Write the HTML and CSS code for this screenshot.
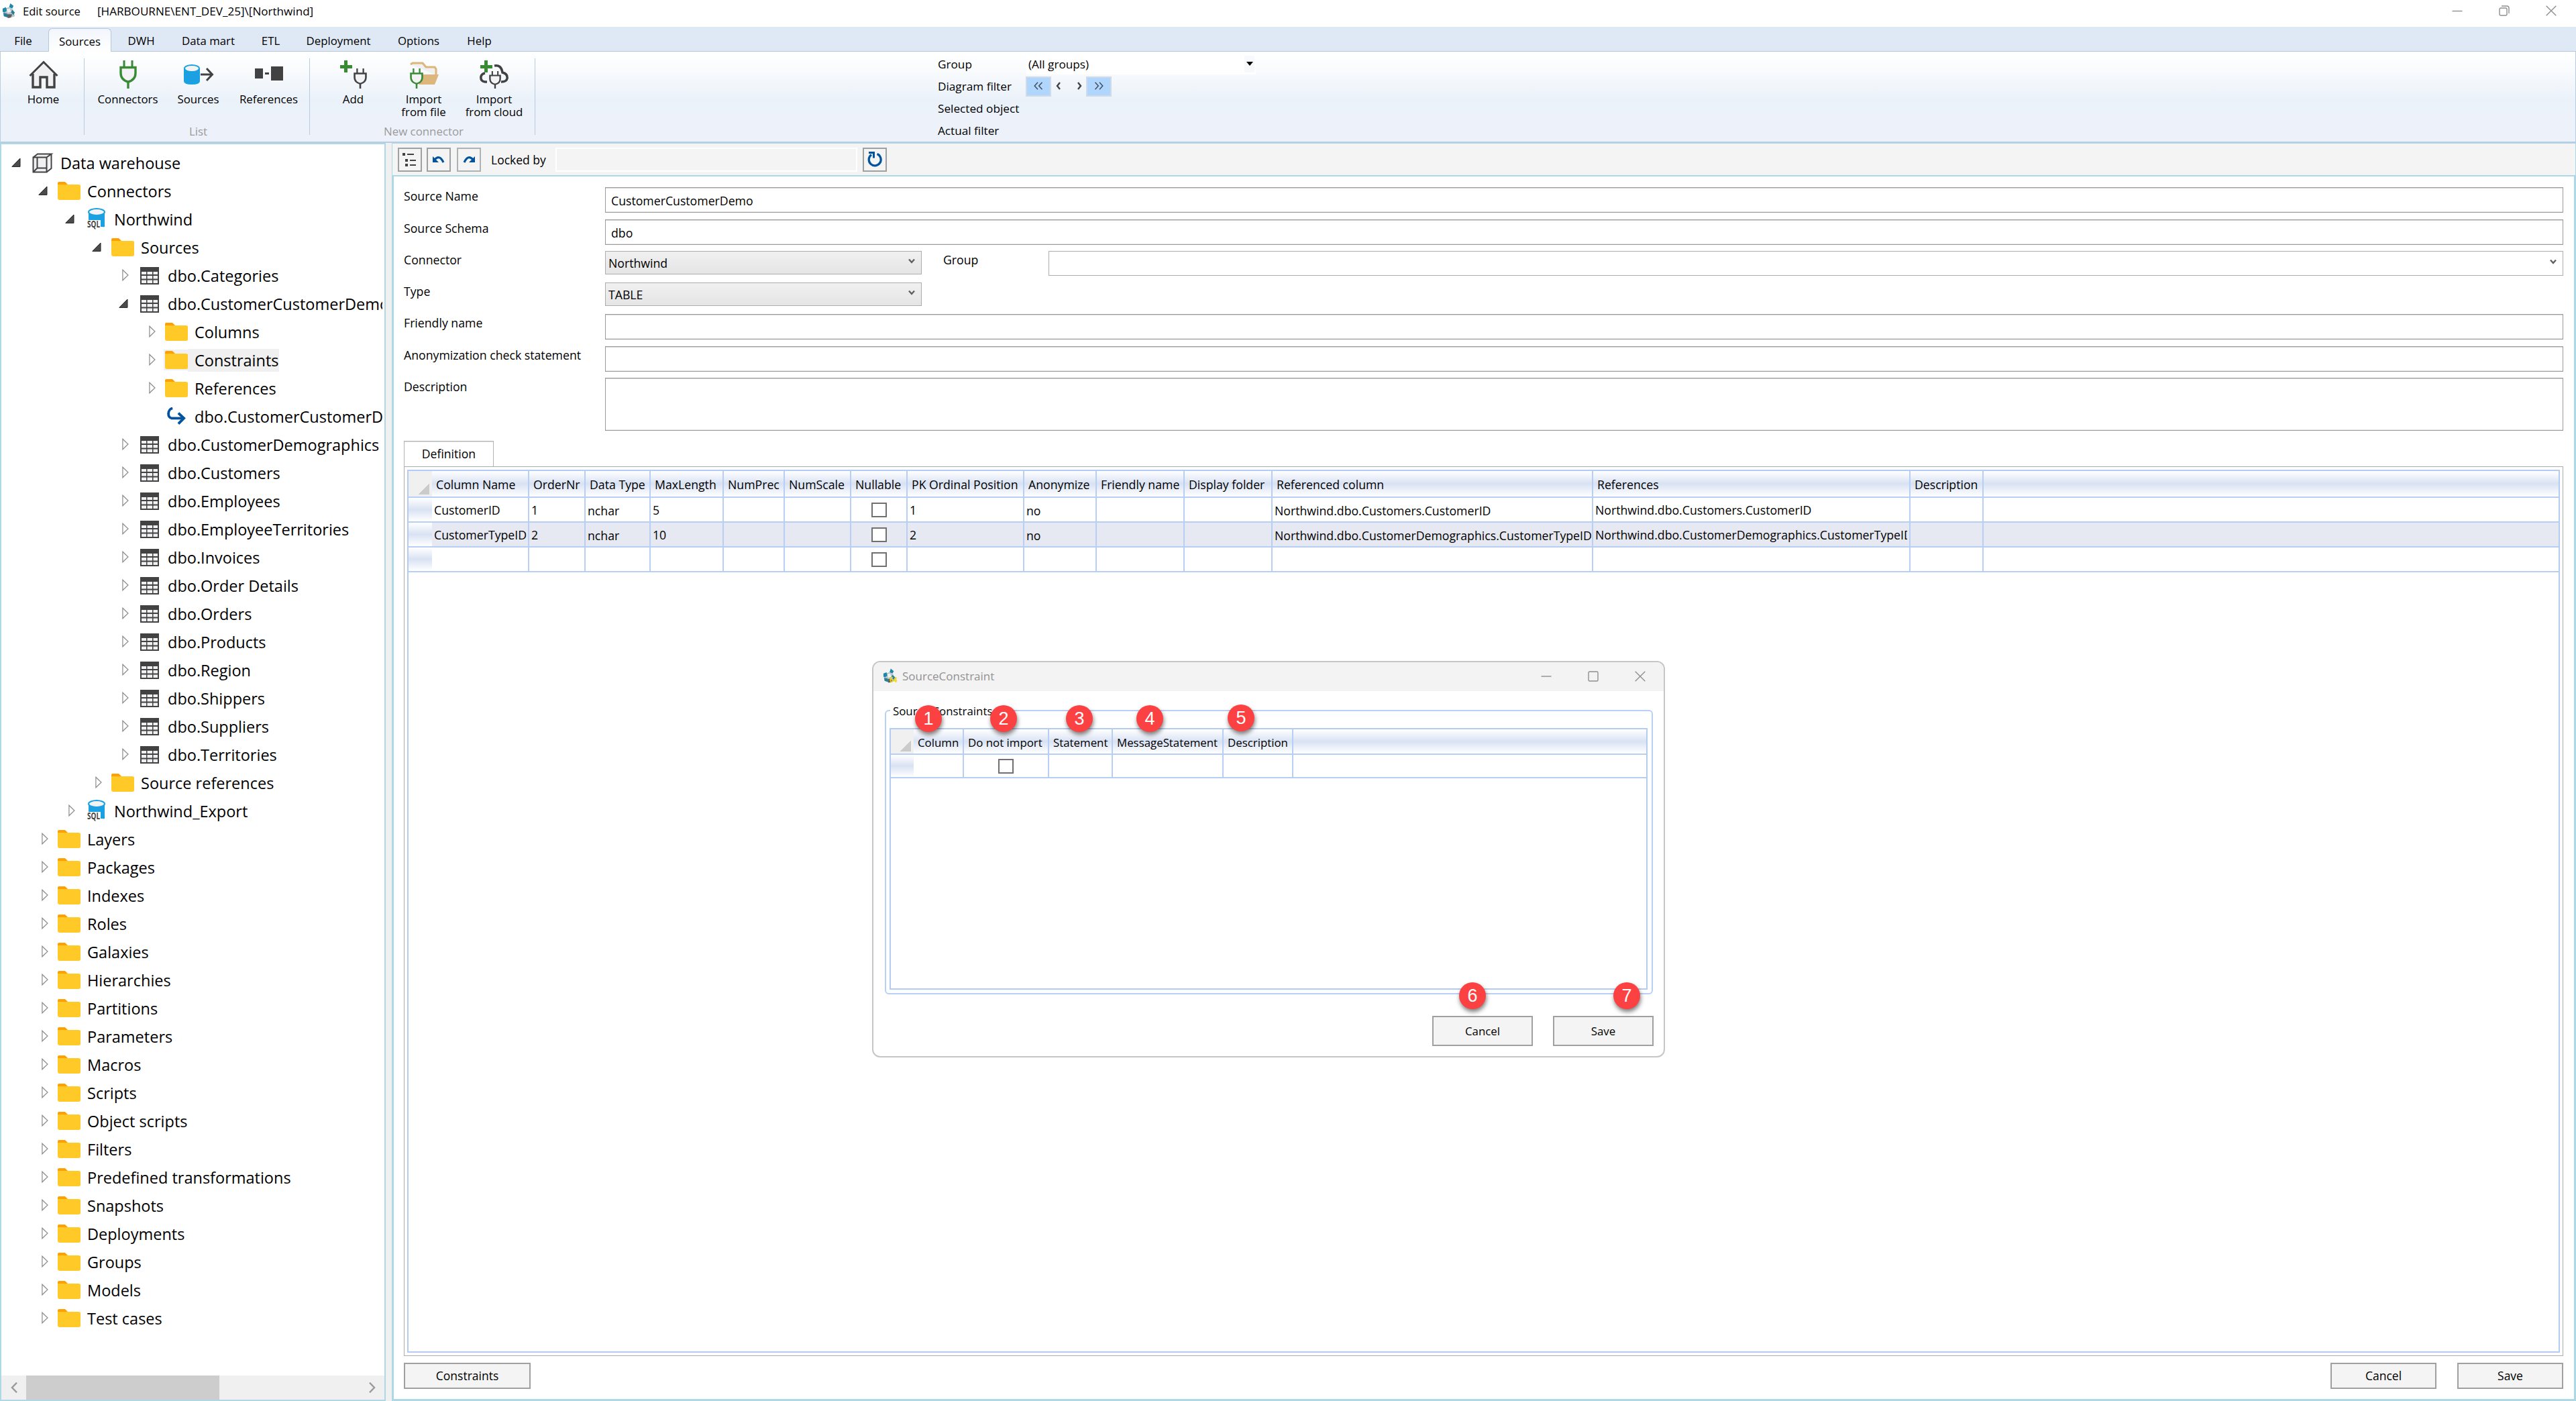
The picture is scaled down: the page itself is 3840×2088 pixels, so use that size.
FILE: index.html
```html
<!DOCTYPE html>
<html lang="en">
<head>
<meta charset="utf-8">
<title>Edit source</title>
<link rel="stylesheet" href="styles.css">
</head>
<body>
<svg class="sprite" width="0" height="0" aria-hidden="true">
  <defs>
    <symbol id="open" viewBox="0 0 14 14"><path d="M13 1V13.4H.8Z" fill="#4c4c4c" stroke="#262626"/></symbol>
    <symbol id="closed" viewBox="0 0 10 18"><path d="M.9 1.2V16.8L9 9Z" fill="#fff" stroke="#8c8c8c" stroke-width="1.2"/></symbol>
    <symbol id="folder" viewBox="0 0 34 27"><path d="M0 2Q0 0 2 0H11L15 4V8H0Z" fill="#ffa000"/><path d="M0 4H31Q34 4 34 6V24.500Q34 27 31 27H3Q0 27 0 24Z" fill="#ffca28"/></symbol>
    <symbol id="table" viewBox="0 0 28 26"><path d="M0 0H28V26H0Z" fill="#424242"/><path d="M2 7H9V11H2ZM10.500 7H18V11H10.500ZM19.500 7H26V11H19.500ZM2 13H9V17.500H2ZM10.500 13H18V17.500H10.500ZM19.500 13H26V17.500H19.500ZM2 19.500H9V24H2ZM10.500 19.500H18V24H10.500ZM19.500 19.500H26V24H19.500Z" fill="#f0eff1"/></symbol>
    <symbol id="sql" viewBox="0 0 28 32"><path d="M3 5V28Q14 31 27 28V5Z" fill="#1ba1e2"/><ellipse cx="15" cy="6" rx="12" ry="5" fill="#f3f3f3" stroke="#1ba1e2" stroke-width="2"/><path d="M0 18H21V28H25L21 32H0Z" fill="#fff"/><text x="1" y="29" class="sql-text" textLength="19" lengthAdjust="spacingAndGlyphs">SQL</text></symbol>
    <symbol id="cube" viewBox="0 0 30 30"><path d="M1.500 7 9 1.500H28.500L25 24 20 28.500H1.500Z" fill="#f0eff1"/><path d="M1.500 6.500H21.500V28.500H1.500ZM1.500 6.500 8 1.500H28.500L21.500 6.500M28.500 1.500V23L21.500 28.500M7.500 6.500V22.500L1.500 28.500M7.500 22.500H21.500" fill="none" stroke="#424242" stroke-width="2"/></symbol>
    <symbol id="goto" viewBox="0 0 30 28"><path d="M9 1.500C1 3 .5 16.500 8 17H26" fill="none" stroke="#00539c" stroke-width="4"/><path d="M18 9 26.500 17 18 25.500" fill="none" stroke="#00539c" stroke-width="4"/></symbol>
    <symbol id="app" viewBox="0 0 22 24"><path d="M10 6 17 9 20 20 11 23 3 20 1 10Z" fill="#b9c2c6"/><path d="M13 0 18 4 16 8 11 6ZM1 8 6 6 8 11 4 14 1 13Z" fill="#1e88a8"/><path d="M2 15 8 16 9 22 3 20ZM16 10 20 14 18 18 14 14Z" fill="#247f9c"/><path d="M7 9 12 8 14 13 9 15Z" fill="#eef1f2"/><path d="M8 17H16L14 22 9 23Z" fill="#5d6163"/></symbol>
    <symbol id="plug" viewBox="0 0 26 42"><path d="M7 0V10M19 0V10" stroke-width="3"/><path d="M2 10.500H24V19Q24 29 13 32 2 29 2 19Z" fill="#f3f3f5" stroke-width="3.400"/><path d="M13 31V42" stroke-width="3.400"/></symbol>
  </defs>
</svg>

<div class="window">
  <header class="titlebar">
    <svg class="app-icon" width="21" height="23"><use href="#app"/></svg>
    <span class="title">Edit source</span><span class="title-path">[HARBOURNE\ENT_DEV_25]\[Northwind]</span>
    <div class="controls">
      <svg width="16" height="16" viewBox="0 0 16 16"><path d="M.5 8.500H15.500"/></svg>
      <svg width="16" height="16" viewBox="0 0 16 16"><rect x="1" y="4" width="11" height="11" rx="2"/><path d="M4 1H12Q15 1 15 4V12"/></svg>
      <svg width="16" height="16" viewBox="0 0 16 16"><path d="M.7.7 15.300 15.300M15.300.7.7 15.300"/></svg>
    </div>
  </header>

  <nav class="tabs"><span>File</span><span class="active">Sources</span><span>DWH</span><span>Data mart</span><span>ETL</span><span>Deployment</span><span>Options</span><span>Help</span></nav>

  <section class="ribbon">
    <div class="group home">
      <div class="tool"><svg width="44" height="42" viewBox="0 0 44 42"><path d="M8 20 22 4 36 20V40H26V25H18V40H8Z" fill="#f0eff1"/><path d="M1.500 23 22 2.500 42.500 23" fill="none" stroke="#424242" stroke-width="3"/><path d="M6 20V40H17V25H27V40H38V20" fill="none" stroke="#424242" stroke-width="3.400"/></svg><span>Home</span></div>
    </div>
    <div class="group">
      <div class="tool"><svg class="green" width="26" height="42"><use href="#plug"/></svg><span>Connectors</span></div>
      <div class="tool"><svg width="46" height="42" viewBox="0 0 46 42"><path d="M1 12V31Q1 36 13 36T25 31V12Z" fill="#1ba1e2"/><ellipse cx="13" cy="12" rx="11" ry="5" fill="#f3f3f3" stroke="#1ba1e2" stroke-width="2"/><path d="M26 21H43M35 12 43.500 21 35 30" fill="none" stroke="#424242" stroke-width="3"/></svg><span>Sources</span></div>
      <div class="tool"><svg width="42" height="42" viewBox="0 0 42 42"><path d="M0 12H12V27H0ZM15 18H21V21H15ZM24 9H42V30H24Z" fill="#424242"/></svg><span>References</span></div>
      <div class="caption">List</div>
    </div>
    <div class="group">
      <div class="tool"><svg width="42" height="42" viewBox="0 0 42 42"><path d="M7 0H12V7H19V12H12V18H7V12H1V7H7Z" fill="#388a34"/><svg class="dark" x="21" y="12" width="20" height="30" viewBox="0 0 26 42" preserveAspectRatio="none"><use href="#plug"/></svg></svg><span>Add</span></div>
      <div class="tool"><svg width="44" height="42" viewBox="0 0 44 42"><path d="M2 6 5 4H20L25 10H38L40 13V22" fill="#f0eff1" stroke="#dcb67a" stroke-width="3"/><path d="M20 21H44L38 36H14Z" fill="#dcb67a"/><svg class="green" x="1" y="12" width="20" height="30" viewBox="0 0 26 42" preserveAspectRatio="none"><use href="#plug"/></svg></svg><span>Import<br>from file</span></div>
      <div class="tool"><svg width="44" height="42" viewBox="0 0 44 42"><path d="M11 32H8Q1 31 2 24 3 20 8 19M22 8Q32 6 34 18 42 20 41 27 40 32 32 32" fill="none" stroke="#424242" stroke-width="3.600"/><path d="M7 0H12V7H19V12H12V18H7V12H1V7H7Z" fill="#388a34"/><svg class="dark" x="14" y="16" width="18" height="26" viewBox="0 0 26 42" preserveAspectRatio="none"><use href="#plug"/></svg></svg><span>Import<br>from cloud</span></div>
      <div class="caption">New connector</div>
    </div>
    <div class="filters">
      <span>Group</span><div class="group-pick">(All groups)<i><svg width="10" height="6" viewBox="0 0 10 6"><path d="M0 0H10L5 6Z"/></svg></i></div>
      <span>Diagram filter</span>
      <div class="steps">
        <b><svg width="14" height="12" viewBox="0 0 14 12"><path d="M6 .8 1.200 6 6 11.200M12.500.8 7.700 6 12.500 11.200"/></svg></b>
        <em><svg width="8" height="12" viewBox="0 0 8 12"><path class="bold" d="M6 1 2 6 6 11"/></svg></em>
        <em class="next"><svg width="8" height="12" viewBox="0 0 8 12"><path class="bold" d="M2 1 6 6 2 11"/></svg></em>
        <b><svg width="14" height="12" viewBox="0 0 14 12"><path d="M1.500.8 6.300 6 1.500 11.200M8 .8 12.800 6 8 11.200"/></svg></b>
      </div>
      <span>Selected object</span><span></span>
      <span>Actual filter</span><span></span>
    </div>
  </section>

  <div class="workspace">
    <aside class="tree-panel">
      <div class="tree">
        <div class="node l0"><svg class="arrow"><use href="#open"/></svg><svg class="icon"><use href="#cube"/></svg><span>Data warehouse</span></div>
        <div class="node l1"><svg class="arrow"><use href="#open"/></svg><svg class="icon"><use href="#folder"/></svg><span>Connectors</span></div>
        <div class="node l2"><svg class="arrow"><use href="#open"/></svg><svg class="icon sql"><use href="#sql"/></svg><span>Northwind</span></div>
        <div class="node l3"><svg class="arrow"><use href="#open"/></svg><svg class="icon"><use href="#folder"/></svg><span>Sources</span></div>
        <div class="node l4 shut"><svg class="arrow"><use href="#closed"/></svg><svg class="icon tbl"><use href="#table"/></svg><span>dbo.Categories</span></div>
        <div class="node l4"><svg class="arrow"><use href="#open"/></svg><svg class="icon tbl"><use href="#table"/></svg><span>dbo.CustomerCustomerDemo</span></div>
        <div class="node l5 shut"><svg class="arrow"><use href="#closed"/></svg><svg class="icon"><use href="#folder"/></svg><span>Columns</span></div>
        <div class="node l5 shut selected"><svg class="arrow"><use href="#closed"/></svg><svg class="icon"><use href="#folder"/></svg><span>Constraints</span></div>
        <div class="node l5 shut"><svg class="arrow"><use href="#closed"/></svg><svg class="icon"><use href="#folder"/></svg><span>References</span></div>
        <div class="node l5"><svg class="arrow"></svg><svg class="icon"><use href="#goto"/></svg><span>dbo.CustomerCustomerDemo</span></div>
        <div class="node l4 shut"><svg class="arrow"><use href="#closed"/></svg><svg class="icon tbl"><use href="#table"/></svg><span>dbo.CustomerDemographics</span></div>
        <div class="node l4 shut"><svg class="arrow"><use href="#closed"/></svg><svg class="icon tbl"><use href="#table"/></svg><span>dbo.Customers</span></div>
        <div class="node l4 shut"><svg class="arrow"><use href="#closed"/></svg><svg class="icon tbl"><use href="#table"/></svg><span>dbo.Employees</span></div>
        <div class="node l4 shut"><svg class="arrow"><use href="#closed"/></svg><svg class="icon tbl"><use href="#table"/></svg><span>dbo.EmployeeTerritories</span></div>
        <div class="node l4 shut"><svg class="arrow"><use href="#closed"/></svg><svg class="icon tbl"><use href="#table"/></svg><span>dbo.Invoices</span></div>
        <div class="node l4 shut"><svg class="arrow"><use href="#closed"/></svg><svg class="icon tbl"><use href="#table"/></svg><span>dbo.Order Details</span></div>
        <div class="node l4 shut"><svg class="arrow"><use href="#closed"/></svg><svg class="icon tbl"><use href="#table"/></svg><span>dbo.Orders</span></div>
        <div class="node l4 shut"><svg class="arrow"><use href="#closed"/></svg><svg class="icon tbl"><use href="#table"/></svg><span>dbo.Products</span></div>
        <div class="node l4 shut"><svg class="arrow"><use href="#closed"/></svg><svg class="icon tbl"><use href="#table"/></svg><span>dbo.Region</span></div>
        <div class="node l4 shut"><svg class="arrow"><use href="#closed"/></svg><svg class="icon tbl"><use href="#table"/></svg><span>dbo.Shippers</span></div>
        <div class="node l4 shut"><svg class="arrow"><use href="#closed"/></svg><svg class="icon tbl"><use href="#table"/></svg><span>dbo.Suppliers</span></div>
        <div class="node l4 shut"><svg class="arrow"><use href="#closed"/></svg><svg class="icon tbl"><use href="#table"/></svg><span>dbo.Territories</span></div>
        <div class="node l3 shut"><svg class="arrow"><use href="#closed"/></svg><svg class="icon"><use href="#folder"/></svg><span>Source references</span></div>
        <div class="node l2 shut"><svg class="arrow"><use href="#closed"/></svg><svg class="icon sql"><use href="#sql"/></svg><span>Northwind_Export</span></div>
        <div class="node l1 shut"><svg class="arrow"><use href="#closed"/></svg><svg class="icon"><use href="#folder"/></svg><span>Layers</span></div>
        <div class="node l1 shut"><svg class="arrow"><use href="#closed"/></svg><svg class="icon"><use href="#folder"/></svg><span>Packages</span></div>
        <div class="node l1 shut"><svg class="arrow"><use href="#closed"/></svg><svg class="icon"><use href="#folder"/></svg><span>Indexes</span></div>
        <div class="node l1 shut"><svg class="arrow"><use href="#closed"/></svg><svg class="icon"><use href="#folder"/></svg><span>Roles</span></div>
        <div class="node l1 shut"><svg class="arrow"><use href="#closed"/></svg><svg class="icon"><use href="#folder"/></svg><span>Galaxies</span></div>
        <div class="node l1 shut"><svg class="arrow"><use href="#closed"/></svg><svg class="icon"><use href="#folder"/></svg><span>Hierarchies</span></div>
        <div class="node l1 shut"><svg class="arrow"><use href="#closed"/></svg><svg class="icon"><use href="#folder"/></svg><span>Partitions</span></div>
        <div class="node l1 shut"><svg class="arrow"><use href="#closed"/></svg><svg class="icon"><use href="#folder"/></svg><span>Parameters</span></div>
        <div class="node l1 shut"><svg class="arrow"><use href="#closed"/></svg><svg class="icon"><use href="#folder"/></svg><span>Macros</span></div>
        <div class="node l1 shut"><svg class="arrow"><use href="#closed"/></svg><svg class="icon"><use href="#folder"/></svg><span>Scripts</span></div>
        <div class="node l1 shut"><svg class="arrow"><use href="#closed"/></svg><svg class="icon"><use href="#folder"/></svg><span>Object scripts</span></div>
        <div class="node l1 shut"><svg class="arrow"><use href="#closed"/></svg><svg class="icon"><use href="#folder"/></svg><span>Filters</span></div>
        <div class="node l1 shut"><svg class="arrow"><use href="#closed"/></svg><svg class="icon"><use href="#folder"/></svg><span>Predefined transformations</span></div>
        <div class="node l1 shut"><svg class="arrow"><use href="#closed"/></svg><svg class="icon"><use href="#folder"/></svg><span>Snapshots</span></div>
        <div class="node l1 shut"><svg class="arrow"><use href="#closed"/></svg><svg class="icon"><use href="#folder"/></svg><span>Deployments</span></div>
        <div class="node l1 shut"><svg class="arrow"><use href="#closed"/></svg><svg class="icon"><use href="#folder"/></svg><span>Groups</span></div>
        <div class="node l1 shut"><svg class="arrow"><use href="#closed"/></svg><svg class="icon"><use href="#folder"/></svg><span>Models</span></div>
        <div class="node l1 shut"><svg class="arrow"><use href="#closed"/></svg><svg class="icon"><use href="#folder"/></svg><span>Test cases</span></div>
      </div>
      <div class="hscroll">
        <div class="end"><svg width="12" height="16" viewBox="0 0 12 16"><path d="M10 .7 3 8 10 15.300"/></svg></div>
        <div class="thumb"></div>
        <div class="end right"><svg width="12" height="16" viewBox="0 0 12 16"><path d="M2 .7 9 8 2 15.300"/></svg></div>
      </div>
    </aside>

    <main class="editor">
      <div class="toolbar">
        <button><svg width="24" height="24" viewBox="0 0 24 24"><path d="M1 2H5V6H1ZM5 11H9V15H5ZM5 18H9V22H5Z" fill="#424242"/><path d="M8 4H18M12 13H21M12 20H21" stroke="#424242" stroke-width="2"/></svg></button>
        <button><svg width="20" height="16" viewBox="0 0 20 16"><path d="M3 9Q11-1 17 12" fill="none" stroke="#00539c" stroke-width="3.200"/><path d="M1 3V12H10Z" fill="#00539c"/></svg></button>
        <button><svg width="20" height="16" viewBox="0 0 20 16"><path d="M17 9Q9-1 3 12" fill="none" stroke="#00539c" stroke-width="3.200"/><path d="M19 3V12H10Z" fill="#00539c"/></svg></button>
        <span>Locked by</span><div class="locked"></div>
        <button><svg width="24" height="24" viewBox="0 0 24 24"><path d="M15.500 3.500A9 9 0 1 1 7 4.500" fill="none" stroke="#00539c" stroke-width="3.200"/><path d="M3 1.500H10.500V9.500" fill="none" stroke="#00539c" stroke-width="3"/></svg></button>
      </div>

      <div class="body">
        <div class="form">
          <label>Source Name</label><div class="input">CustomerCustomerDemo</div>
          <label>Source Schema</label><div class="input">dbo</div>
          <label>Connector</label>
          <div class="pair">
            <div class="combo">Northwind<svg width="12" height="8" viewBox="0 0 12 8"><path d="M2 1.500 6 6 10 1.500"/></svg></div>
            <span>Group</span>
            <div class="combo wide"><svg width="12" height="8" viewBox="0 0 12 8"><path d="M2 1.500 6 6 10 1.500"/></svg></div>
          </div>
          <label>Type</label><div class="combo">TABLE<svg width="12" height="8" viewBox="0 0 12 8"><path d="M2 1.500 6 6 10 1.500"/></svg></div>
          <label>Friendly name</label><div class="input"></div>
          <label>Anonymization check statement</label><div class="input"></div>
          <label>Description</label><div class="input tall"></div>
        </div>

        <div class="page-tab">Definition</div>
        <div class="page">
          <div class="datagrid main-grid">
            <div class="row head"><span class="corner"></span><span>Column Name</span><span>OrderNr</span><span>Data Type</span><span>MaxLength</span><span>NumPrec</span><span>NumScale</span><span>Nullable</span><span>PK Ordinal Position</span><span>Anonymize</span><span>Friendly name</span><span>Display folder</span><span>Referenced column</span><span>References</span><span>Description</span><span></span></div>
            <div class="row"><span class="handle"></span><span>CustomerID</span><span>1</span><span class="low">nchar</span><span>5</span><span></span><span></span><span class="check"><i></i></span><span>1</span><span class="low">no</span><span></span><span></span><span class="low">Northwind.dbo.Customers.CustomerID</span><span>Northwind.dbo.Customers.CustomerID</span><span></span><span></span></div>
            <div class="row shaded"><span class="handle"></span><span>CustomerTypeID</span><span>2</span><span class="low">nchar</span><span>10</span><span></span><span></span><span class="check"><i></i></span><span>2</span><span class="low">no</span><span></span><span></span><span class="low">Northwind.dbo.CustomerDemographics.CustomerTypeID</span><span><u>Northwind.dbo.CustomerDemographics.CustomerTypeID</u></span><span></span><span></span></div>
            <div class="row"><span class="handle"></span><span></span><span></span><span></span><span></span><span></span><span></span><span class="check"><i></i></span><span></span><span></span><span></span><span></span><span></span><span></span><span></span><span></span></div>
          </div>
        </div>

        <footer class="actions"><button>Constraints</button><button class="push">Cancel</button><button>Save</button></footer>
      </div>
    </main>
  </div>
</div>

<div class="dialog">
  <div class="dialog-title">
    <svg width="20" height="23"><use href="#app"/></svg><em>64</em><span>SourceConstraint</span>
    <div class="controls">
      <svg width="16" height="16" viewBox="0 0 16 16"><path d="M.5 8H15.500"/></svg>
      <svg width="16" height="16" viewBox="0 0 16 16"><rect x="1" y="1" width="14" height="14" rx="1.500"/></svg>
      <svg width="16" height="16" viewBox="0 0 16 16"><path d="M.7.7 15.300 15.300M15.300.7.7 15.300"/></svg>
    </div>
  </div>
  <div class="groupbox">
    <div class="legend">Source Constraints</div>
    <div class="datagrid small-grid">
      <div class="row head"><span class="corner"></span><span>Column</span><span>Do not import</span><span>Statement</span><span>MessageStatement</span><span>Description</span><span></span></div>
      <div class="row"><span class="handle"></span><span></span><span class="check"><i></i></span><span></span><span></span><span></span><span></span></div>
    </div>
  </div>
  <div class="dialog-actions"><button>Cancel</button><button>Save</button></div>
  <div class="mark m1">1</div><div class="mark m2">2</div><div class="mark m3">3</div><div class="mark m4">4</div><div class="mark m5">5</div><div class="mark m6">6</div><div class="mark m7">7</div>
</div>
</body>
</html>
```
FILE: styles.css
```css
* { box-sizing: border-box; }
body { margin: 0; width: 3840px; height: 2088px; overflow: hidden; background: #fff; color: #000; font-family: "Open Sans", "Noto Sans", sans-serif; font-size: 17px; position: relative; }
span, button, div { white-space: nowrap; }
button { font: inherit; color: inherit; margin: 0; padding: 0; border-radius: 0; }
i, em { font-style: normal; }
.sprite { position: absolute; }
.sql-text { font: bold 14px "Open Sans", sans-serif; fill: #424242; }
.green { stroke: #388a34; }
.dark { stroke: #424242; }

.window { height: 2088px; display: flex; flex-direction: column; }

/* Title bar */
.titlebar { height: 40px; flex: none; display: flex; align-items: center; padding: 0 29px 8px 3px; font-size: 17.1px; }
.title { margin-left: 10px; width: 111px; font-size: 16.6px; }
.controls { margin-left: auto; display: flex; }
.controls svg { fill: none; stroke: #8f8f8f; stroke-width: 1.4; }
.titlebar .controls { gap: 54px; }

/* Ribbon */
.tabs { flex: none; height: 37px; background: #dfe8f5; border-bottom: 1px solid #b4c8e0; display: grid; grid-template-columns: 59px 94px 73px 111px 59px 127px 96px 69px; column-gap: 8px; padding-left: 5px; font-size: 16.8px; }
.tabs span { height: 35px; margin-top: 2px; line-height: 38px; text-align: center; }
.tabs .active { border: 1px solid #b4c8e0; border-bottom: 0; border-radius: 6px 6px 0 0; background: linear-gradient(#f2f6fc, #fff); line-height: 38px; }
.ribbon { flex: none; height: 136px; display: flex; border: solid #b8cce2; border-width: 0 1px 2px; background: linear-gradient(#fff 0%, #f9fbfd 20%, #eaf1f9 55%, #edf2fa 72%, #edf2fa 100%); font-size: 16.85px; }
.group { width: 336px; height: 114px; margin-top: 10px; border-right: 1px solid #b9cbdf; display: grid; grid-template-columns: repeat(3, 105px); grid-template-rows: 98px 22px; padding-left: 12px; }
.home { width: 125px; padding-left: 11px; }
.tool { display: flex; flex-direction: column; align-items: center; padding-top: 3px; text-align: center; line-height: 19px; }
.tool > svg { flex: none; margin-bottom: 6px; fill: none; }
.caption { grid-column: 1 / 4; text-align: center; color: #9a9a9a; line-height: 22px; }
.filters { margin: 2px 0 0 600px; display: grid; grid-template-columns: 132px 342px; grid-auto-rows: 33px; align-items: center; font-size: 17.2px; }
.filters > span { margin-top: -1px; }
.group-pick { height: 30px; background: #fff; padding: 0 2px 0 3px; display: flex; align-items: center; justify-content: space-between; }
.group-pick i { width: 15px; height: 25px; background: #f7f9fc; display: flex; align-items: center; justify-content: center; padding-bottom: 2px; }
.steps { height: 30px; display: flex; margin-left: -1px; }
.steps b, .steps em { display: flex; align-items: center; justify-content: center; padding-bottom: 2px; }
.steps b { width: 38px; background: #b1d6fd; border: 2px solid #cfdbe8; }
.steps em { width: 22px; }
.steps .next { width: 30px; padding-left: 9px; }
.steps path { fill: none; stroke: #3e4a58; stroke-width: 1.4; }
.steps .bold { stroke: #424242; stroke-width: 2.4; }

/* Work area */
.workspace { flex: 1; min-height: 0; display: flex; background: #f0f0f0; }
.tree-panel { width: 575px; flex: none; background: #fff; border: 2px solid #add8e6; display: flex; flex-direction: column; }
.tree { flex: 1; overflow: hidden; margin-right: 3px; padding-top: 7px; font-size: 23.5px; }
.node { height: 42px; display: flex; align-items: center; }
.arrow { width: 14px; height: 14px; flex: none; margin: 0 14px 2px -1px; }
.shut .arrow { width: 10px; height: 18px; margin: 0 13px 2px 4px; }
.icon { width: 34px; height: 27px; flex: none; margin: 0 5px 1px 1px; }
.tbl { width: 28px; height: 26px; margin: 0 8px 0 4px; }
.sql { width: 28px; height: 32px; margin: 0 8px 2px 4px; }
.node span { line-height: 34px; padding-left: 5px; }
.l0 { padding-left: 16px; } .l1 { padding-left: 56px; } .l2 { padding-left: 96px; }
.l3 { padding-left: 136px; } .l4 { padding-left: 176px; } .l5 { padding-left: 216px; }
.l0 .icon { height: 30px; }
.selected .icon { box-shadow: 0 0 0 2px #f0f0f0; background: #f0f0f0; margin-right: 0; }
.selected span { background: #f0f0f0; padding-left: 10px; }
.hscroll { height: 36px; flex: none; background: #f0f0f0; display: flex; }
.hscroll .end { width: 37px; display: flex; align-items: center; justify-content: center; }
.hscroll .right { margin-left: auto; }
.hscroll path { fill: none; stroke: #9a9a9a; stroke-width: 2.4; }
.thumb { width: 288px; background: #cdcdcd; }

.editor { flex: 1; min-width: 0; margin-left: 9px; display: flex; flex-direction: column; }
.toolbar { height: 50px; flex: none; background: #f4f4f4; border: solid #add8e6; border-width: 1px 1px 2px; display: flex; align-items: center; padding: 1px 8px 0; font-size: 17.5px; }
.toolbar button { width: 36px; height: 36px; border: 2px solid #a0a0a0; background: #f4f4f4; display: flex; align-items: center; justify-content: center; margin-right: 7px; }
.toolbar button:nth-child(3) { margin: 0 15px 0 2px; border-color: #adb2b5; }
.toolbar span { width: 96px; }
.locked { width: 450px; height: 36px; border: 2px solid #fff; margin-right: 8px; }
.body { flex: 1; min-height: 0; background: #fff; border: 3px solid #add8e6; border-top: 0; padding: 16px 16px 15px 15px; display: flex; flex-direction: column; font-size: 17.7px; }
.form { display: grid; grid-template-columns: 300px 1fr; grid-template-rows: 48px 47px 47px 47px 48px 47px 79px; }
.form label { padding-top: 1px; line-height: 24px; }
.input { height: 38px; border: 1px solid #9a9a9a; padding: 0 8px; line-height: 38px; box-shadow: inset 0 1px #d8d8d8, inset 0 -1px #e6e6e6; }
.tall { height: 79px; }
.combo { width: 472px; height: 35px; border: 1px solid #acacac; background: linear-gradient(#f0f0f0, #e5e5e5); padding: 1px 8px 0 4px; display: flex; align-items: center; justify-content: space-between; }
.combo svg { margin: -6px 0 0 auto; fill: none; stroke: #606060; stroke-width: 2.4; }
.pair { display: flex; }
.pair span { width: 189px; padding-left: 32px; line-height: 26px; }
.combo.wide { width: auto; flex: 1; height: 37px; background: #fff; }
.page-tab { width: 134px; height: 39px; margin-top: 15px; border: 1px solid #b4b4b4; border-bottom: 0; text-align: center; line-height: 36px; font-size: 17.6px; background: #fff; box-shadow: inset 0 1px #ddd; }
.page { flex: 1; min-height: 0; border: 1px solid #acacac; padding: 4px; margin-top: -1px; }
.actions { height: 49px; display: flex; align-items: flex-end; gap: 31px; flex: none; font-size: 17.5px; }
.actions button { width: 158px; height: 39px; border: 2px solid #a0a0a0; background: #f4f4f4; padding-bottom: 1px; }
.actions button:first-child { width: 189px; }
.push { margin-left: auto; }

/* Data grids */
.datagrid { height: 100%; border: 2px solid #b4cbf3; }
.row { display: grid; height: 37px; border-bottom: 2px solid #b8cff5; }
.row > span { border-right: 2px solid #b8cff5; padding-left: 3px; line-height: 37px; overflow: hidden; }
.row > span:last-child, .row > .corner, .row > .handle { border-right: 0; }
.row .low { line-height: 39px; }
.row u { display: block; width: 465px; overflow: hidden; text-decoration: none; }
.head { height: 40px; background: linear-gradient(#fff, #d9e2f3 50%, #fff); }
.head > span { padding-left: 6px; line-height: 41px; }
.head .corner { background: linear-gradient(135deg, transparent 50%, #cbcbcb 50%) right 4px bottom 3px / 16px 16px no-repeat, #f0f0f0; }
.handle { background: linear-gradient(#fff, #d9e2f3 50%, #fff); }
.shaded { background: #e6e9f1; }
.row > .check { padding: 0; display: flex; align-items: center; justify-content: center; }
.check i { width: 23px; height: 22px; border: 2px solid #707070; background: #fff; }
.main-grid .row { grid-template-columns: 35px 145px 84px 97px 109px 91px 99px 84px 174px 108px 131px 131px 478px 473px 109px 1fr; }
.small-grid .row { grid-template-columns: 34px 75px 127px 95px 165px 104px 1fr; height: 35px; }
.small-grid .row.head { height: 38px; }
.small-grid .head > span { line-height: 39px; }

/* Constraint dialog */
.dialog { position: absolute; left: 1300px; top: 985px; width: 1182px; height: 591px; border: 2px solid #c6c6c6; border-radius: 12px; background: #fff; font-size: 16.85px; }
.dialog-title { height: 43px; background: #f3f3f3; border-radius: 10px 10px 0 0; display: flex; align-items: center; padding: 0 27px 2px 14px; color: #929292; font-size: 17px; }
.dialog-title em { width: 0; font: bold 10px "Open Sans", sans-serif; color: #f1d400; text-indent: -10px; margin-top: 11px; }
.dialog-title span { margin-left: 9px; }
.dialog-title .controls { gap: 54px; }
.groupbox { width: 1145px; height: 424px; margin: 28px 0 0 17px; border: 2px solid #b9d0f6; border-radius: 6px; padding: 0 6px 5px 5px; display: flex; flex-direction: column; }
.legend { height: 25px; flex: none; margin: -13px 0 13px 1px; width: 153px; background: #fff; padding-left: 4px; line-height: 25px; }
.small-grid { height: auto; flex: 1; }
.dialog-actions { display: flex; justify-content: flex-end; gap: 30px; margin: 32px 15px 0 0; }
.dialog-actions button { width: 150px; height: 45px; border: 2px solid #a0a0a0; background: #f4f4f4; }
.mark { position: absolute; width: 40px; height: 40px; border-radius: 50%; background: #fb4142; color: #fff; font: 27px/40px "Liberation Sans", Arial, sans-serif; text-align: center; box-shadow: 1px 4px 6px rgba(0, 0, 0, .5); top: 64px; }
.m1 { left: 62px; } .m2 { left: 174px; } .m3 { left: 287px; } .m4 { left: 392px; }
.m5 { left: 528px; top: 63px; } .m6 { left: 873px; top: 477px; } .m7 { left: 1103px; top: 477px; }
```
